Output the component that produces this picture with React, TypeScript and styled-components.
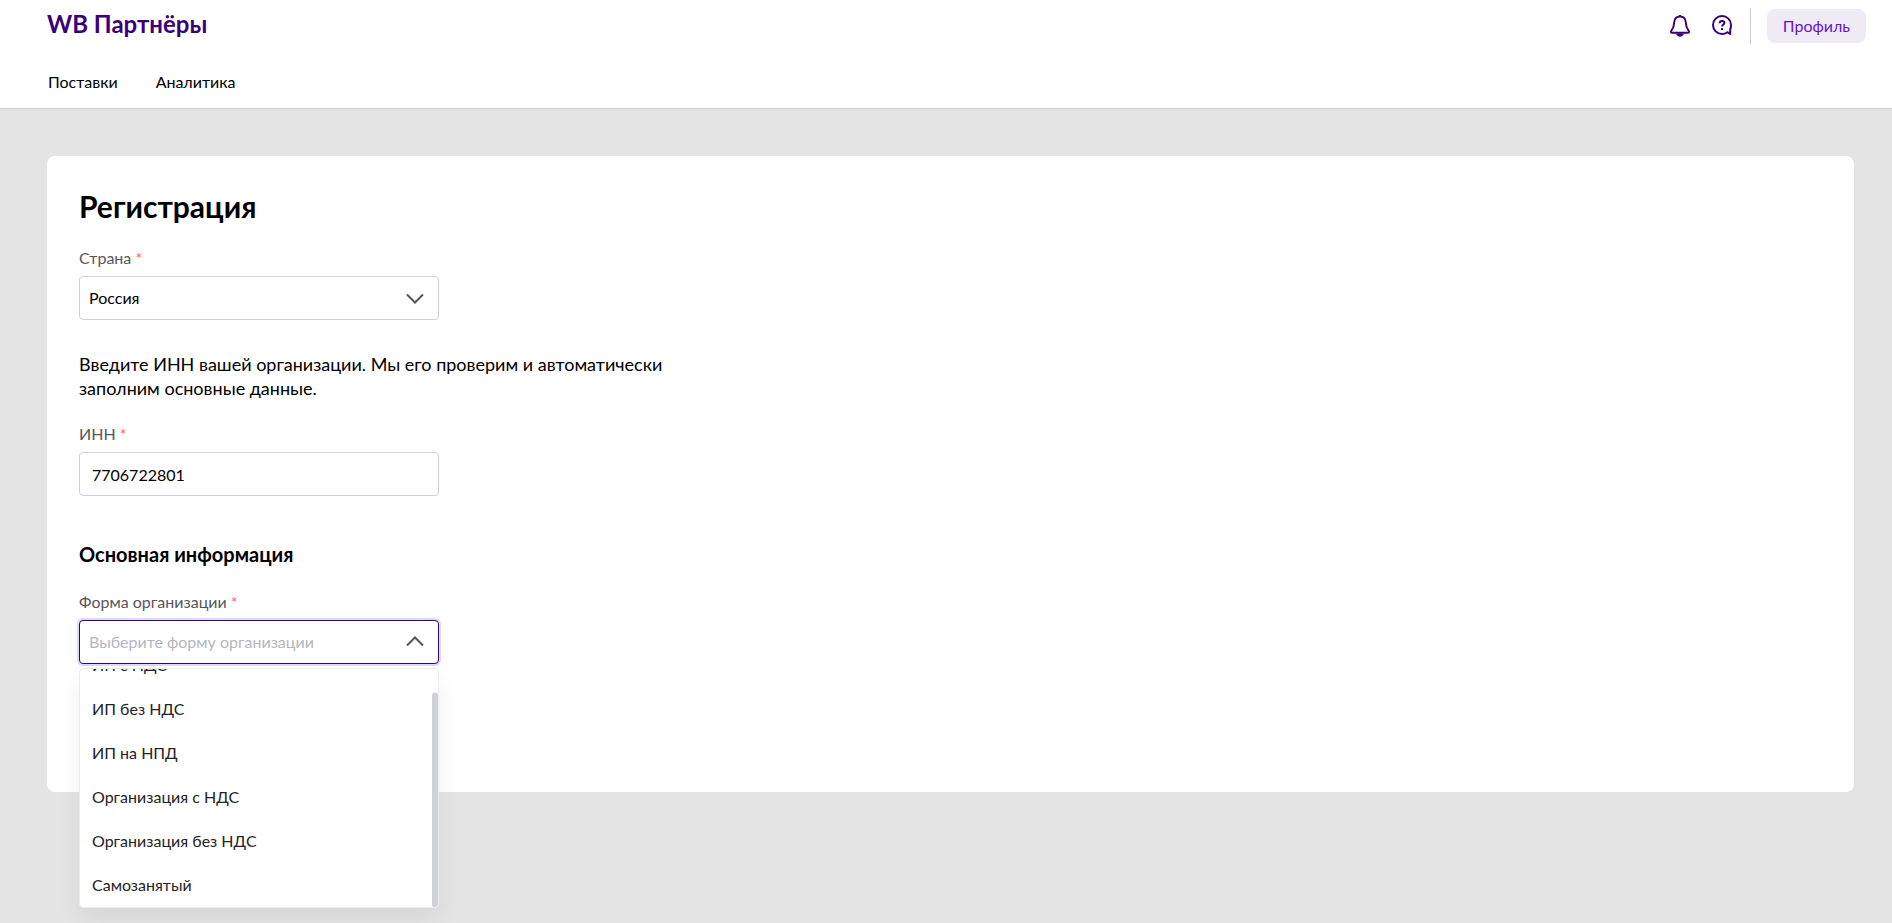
import React, { useEffect, useRef, useState } from "react";
import styled, { createGlobalStyle } from "styled-components";

const GlobalStyle = createGlobalStyle`
  *, *::before, *::after { box-sizing: border-box; }
  body {
    margin: 0;
    background: #e4e4e4;
    color: #000;
    font-family: Lato, "Open Sans", sans-serif;
    font-size: 16px;
    line-height: 24px;
  }
  button, input, select { font: inherit; }
`;

const Page = styled.div`
  min-height: 100vh;
  display: flex;
  flex-direction: column;
`;

const Header = styled.header`
  background: #fff;
  border-bottom: 1px solid #d0d0d8;
`;

const TopBar = styled.div`
  display: flex;
  align-items: center;
  justify-content: space-between;
  height: 52px;
  padding: 0 26px 0 47px;
`;

const Brand = styled.a`
  color: #3b0078;
  font-size: 24px;
  line-height: 28px;
  font-weight: 700;
  text-decoration: none;
  padding-bottom: 4px;
`;

const Actions = styled.div`
  display: flex;
  align-items: center;
`;

const IconButton = styled.button`
  display: flex;
  align-items: center;
  justify-content: center;
  width: 42px;
  height: 36px;
  padding: 0;
  border: 0;
  background: none;
  color: #3b0078;
  cursor: pointer;
`;

const Divider = styled.span`
  width: 1px;
  height: 36px;
  margin: 0 16px 0 7px;
  background: #cdc6de;
`;

const ProfileButton = styled.button`
  height: 34px;
  padding: 0 16px;
  border: 0;
  border-radius: 8px;
  background: #eeebf5;
  color: #6a11cb;
  cursor: pointer;
`;

const Nav = styled.nav`
  display: flex;
  gap: 38px;
  height: 56px;
  padding: 18px 48px 0;
`;

const NavLink = styled.a`
  color: #000;
  text-decoration: none;
`;

const Main = styled.main`
  padding: 47px 38px 128px 47px;
`;

const Card = styled.section`
  padding: 30px 32px 128px;
  border-radius: 8px;
  background: #fff;
`;

const Title = styled.h1`
  margin: 0 0 20px;
  font-size: 30px;
  line-height: 40px;
  font-weight: 700;
`;

const Subtitle = styled.h2`
  margin: 46px 0 24px;
  font-size: 20px;
  line-height: 24px;
  font-weight: 700;
`;

const Note = styled.p`
  max-width: 600px;
  margin: 32px 0 22px;
  font-size: 18px;
  line-height: 24px;
`;

const Field = styled.div`
  display: flex;
  flex-direction: column;
  gap: 6px;
  width: 360px;
  max-width: 100%;
`;

const Label = styled.label`
  color: #57575c;
`;

const Required = styled.span`
  color: #ff5a5a;
`;

const Control = styled.div`
  position: relative;
`;

const Select = styled.select<{ $open?: boolean; $empty?: boolean }>`
  display: block;
  width: 100%;
  height: 44px;
  padding: 0 40px 0 9px;
  border: 1px solid ${(p) => (p.$open ? "#3b0078" : "#d0d0d8")};
  border-radius: 4px;
  outline: none;
  appearance: none;
  background: #fff;
  color: ${(p) => (p.$empty ? "#b5b5c0" : "#000")};
  box-shadow: ${(p) => (p.$open ? "0 0 0 2px #d9dcf8" : "none")};
`;

const Input = styled.input`
  width: 100%;
  height: 44px;
  padding: 0 12px;
  border: 1px solid #d0d0d8;
  border-radius: 4px;
  outline: none;
  background: #fff;
  color: #000;
`;

const Chevron = styled.svg<{ $up?: boolean }>`
  position: absolute;
  top: 10px;
  right: 12px;
  pointer-events: none;
  transform: ${(p) => (p.$up ? "rotate(180deg)" : "none")};
`;

const Menu = styled.div`
  position: absolute;
  top: 48px;
  left: 0;
  right: 0;
  z-index: 1;
  overflow: hidden;
  border: 1px solid #ededf0;
  border-radius: 4px;
  background: #fff;
  box-shadow: 0 12px 24px rgba(0, 0, 0, 0.06);
`;

const Options = styled.ul`
  height: 238px;
  margin: 0;
  padding: 0;
  overflow-y: auto;
  list-style: none;
  scrollbar-width: none;
`;

const Thumb = styled.span`
  position: absolute;
  top: 0;
  right: 0;
  width: 6px;
  border-radius: 3px;
  background: #d0d0d8;
  pointer-events: none;
`;

const Option = styled.li`
  height: 44px;
  padding: 10px 12px;
  color: #242424;
  cursor: pointer;

  &:hover { background: #f6f5fa; }
`;

const FORMS = [
  "ИП с НДС",
  "ИП без НДС",
  "ИП на НПД",
  "Организация с НДС",
  "Организация без НДС",
  "Самозанятый",
];

const ChevronIcon = ({ up }: { up?: boolean }) => (
  <Chevron $up={up} width="24" height="24" viewBox="0 0 24 24" fill="none" aria-hidden="true">
    <path d="M4 8.5l8 8 8-8" stroke="#57575c" strokeWidth="2" />
  </Chevron>
);

const BellIcon = () => (
  <svg width="24" height="24" viewBox="0 0 24 24" fill="none" stroke="currentColor" strokeWidth="2" strokeLinejoin="round" aria-hidden="true">
    <path d="M12 2.500c-3.500 0-5.600 2.500-5.800 6-.2 4.500-.9 6-2.800 8.200-.8 1-.5 2 .8 2h15.600c1.300 0 1.600-1 .8-2-1.900-2.200-2.600-3.700-2.800-8.200-.2-3.500-2.300-6-5.800-6z" />
    <path d="M12 1v2" />
    <path d="M8 19.500c.8 2.200 2.200 3.300 4 3.300s3.200-1.100 4-3.300z" fill="currentColor" stroke="none" />
  </svg>
);

const HelpIcon = () => (
  <svg width="24" height="24" viewBox="0 0 24 24" fill="none" stroke="currentColor" strokeWidth="2" strokeLinejoin="round" aria-hidden="true">
    <path d="M21 11a9 9 0 1 0-9 9c2 0 3.900-.6 5.400-1.800l2.800 1.800v-4.300c.5-1.400.8-3 .8-4.700z" />
    <path d="M9.700 9.200c0-1.500 1-2.300 2.400-2.300 1.300 0 2.300.8 2.300 2 0 1.500-2.300 1.500-2.300 3.700M12.100 14v2" />
  </svg>
);

export default function App() {
  const [open, setOpen] = useState(true);
  const [form, setForm] = useState("");
  const [inn, setInn] = useState("7706722801");
  const [thumb, setThumb] = useState({ top: 0, height: 0 });
  const listRef = useRef<HTMLUListElement>(null);

  const updateThumb = () => {
    const list = listRef.current;
    if (!list) return;
    const ratio = list.clientHeight / list.scrollHeight;
    setThumb({ top: list.scrollTop * ratio, height: list.clientHeight * ratio });
  };

  useEffect(() => {
    if (open && listRef.current) {
      listRef.current.scrollTop = listRef.current.scrollHeight;
      updateThumb();
    }
  }, [open]);

  return (
    <Page>
      <GlobalStyle />
      <Header>
        <TopBar>
          <Brand href="#">WB Партнёры</Brand>
          <Actions>
            <IconButton type="button" aria-label="Уведомления"><BellIcon /></IconButton>
            <IconButton type="button" aria-label="Помощь"><HelpIcon /></IconButton>
            <Divider />
            <ProfileButton type="button">Профиль</ProfileButton>
          </Actions>
        </TopBar>
        <Nav>
          <NavLink href="#supplies">Поставки</NavLink>
          <NavLink href="#analytics">Аналитика</NavLink>
        </Nav>
      </Header>
      <Main>
        <Card>
          <Title>Регистрация</Title>
          <Field>
            <Label htmlFor="country">Страна <Required>*</Required></Label>
            <Control>
              <Select id="country" defaultValue="Россия">
                <option>Россия</option>
              </Select>
              <ChevronIcon />
            </Control>
          </Field>
          <Note>
            Введите ИНН вашей организации. Мы его проверим и автоматически заполним основные данные.
          </Note>
          <Field>
            <Label htmlFor="inn">ИНН <Required>*</Required></Label>
            <Input id="inn" value={inn} onChange={(e) => setInn(e.target.value)} />
          </Field>
          <Subtitle>Основная информация</Subtitle>
          <Field>
            <Label htmlFor="form">Форма организации <Required>*</Required></Label>
            <Control>
              <Select
                id="form"
                value={form}
                $open={open}
                $empty={!form}
                onMouseDown={(e) => {
                  e.preventDefault();
                  setOpen(!open);
                }}
                onChange={(e) => setForm(e.target.value)}
              >
                <option value="" disabled>Выберите форму организации</option>
                {FORMS.map((name) => <option key={name}>{name}</option>)}
              </Select>
              <ChevronIcon up={open} />
              {open && (
                <Menu>
                  <Options ref={listRef} role="listbox" aria-label="Форма организации" onScroll={updateThumb}>
                    {FORMS.map((name) => (
                      <Option
                        key={name}
                        role="option"
                        aria-selected={name === form}
                        onClick={() => {
                          setForm(name);
                          setOpen(false);
                        }}
                      >
                        {name}
                      </Option>
                    ))}
                  </Options>
                  <Thumb style={{ height: thumb.height, transform: `translateY(${thumb.top}px)` }} />
                </Menu>
              )}
            </Control>
          </Field>
        </Card>
      </Main>
    </Page>
  );
}
